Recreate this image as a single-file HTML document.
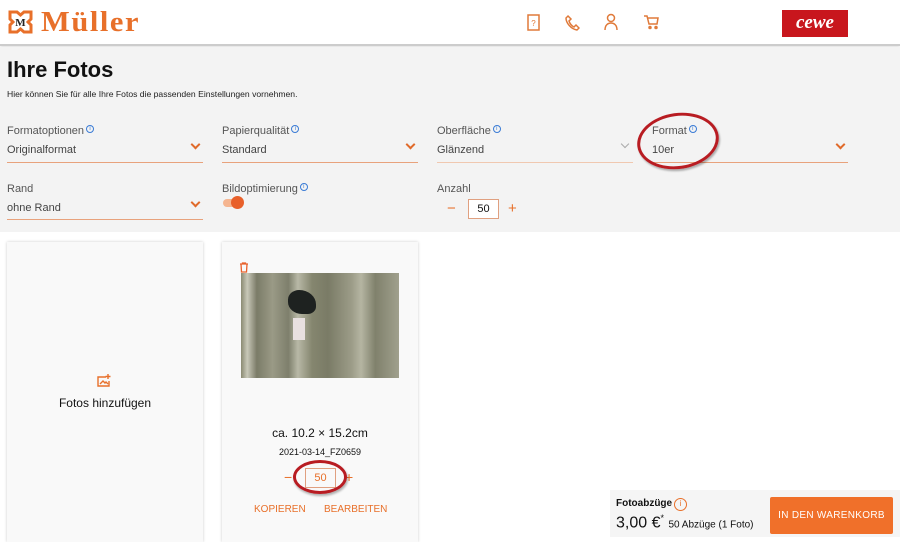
<!DOCTYPE html>
<html><head><meta charset="utf-8"><style>
*{box-sizing:border-box;margin:0;padding:0}
body{width:900px;height:537px;overflow:hidden;background:#fff;font-family:"Liberation Sans",sans-serif;color:#111;position:relative}
.hdr{position:absolute;left:0;top:0;width:900px;height:46px;background:#fff;border-bottom:2px solid #ccc;box-shadow:0 1px 3px rgba(0,0,0,.15)}
.gray{position:absolute;left:0;top:47px;width:900px;height:185px;background:#f3f3f3}
.abs{position:absolute}
.lbl{font-size:11px;color:#555}
.val{font-size:11px;color:#444}
.line{position:absolute;height:1px;background:#e8a27c}
.info{display:inline-block;width:8px;height:8px;border:1px solid #3a7bd5;border-radius:50%;font-size:6px;line-height:6px;text-align:center;color:#3a7bd5;vertical-align:4px;margin-left:2px}
.chev{position:absolute;width:7px;height:7px;border-right:2px solid #e06a2a;border-bottom:2px solid #e06a2a;transform:rotate(45deg)}
.card{position:absolute;background:#f9f9f9;box-shadow:0 0 3px rgba(0,0,0,.2)}
.or{color:#e8702a}
</style></head><body>
<div class="hdr"></div>
<svg class="abs" style="left:7px;top:9px" width="27" height="26" viewBox="0 0 27 26"><path d="M3 3h7l3.5 3 3.5-3h7v7l-3 3 3 3v7h-7l-3.5-3-3.5 3H3v-7l3-3-3-3z" fill="#fff" stroke="#e8702a" stroke-width="3"/><text x="13.5" y="17" font-family="Liberation Serif" font-weight="bold" font-size="11" text-anchor="middle" fill="#222">M</text></svg>
<div class="abs" style="left:41px;top:6px;font-family:'Liberation Serif',serif;font-weight:bold;font-size:29px;color:#e8702a;letter-spacing:1.5px;transform:scaleX(1.05);transform-origin:left">Müller</div>
<svg class="abs" style="left:526px;top:14px" width="16" height="18" viewBox="0 0 16 18" fill="none" stroke="#e07a3a" stroke-width="1.5"><rect x="2" y="1" width="11" height="15"/><text x="7.5" y="12" font-size="8" fill="#e07a3a" stroke="none" text-anchor="middle">?</text></svg>
<svg class="abs" style="left:564px;top:14px" width="16" height="18" viewBox="0 0 16 18" fill="none" stroke="#e07a3a" stroke-width="1.5"><path d="M4 2l3 3-2 2c1 3 3 5 5 6l2-2 3 3-2 2C7 15 2 9 2 4z"/></svg>
<svg class="abs" style="left:603px;top:13px" width="16" height="18" viewBox="0 0 16 18" fill="none" stroke="#e07a3a" stroke-width="1.5"><circle cx="8" cy="5" r="3.5"/><path d="M2 17c0-5 3-7 6-7s6 2 6 7"/></svg>
<svg class="abs" style="left:643px;top:14px" width="17" height="16" viewBox="0 0 17 16" fill="none" stroke="#e07a3a" stroke-width="1.5"><path d="M1 2h3l2 8h8l1-6H5"/><circle cx="7" cy="13.5" r="1" fill="#e07a3a"/><circle cx="13" cy="13.5" r="1" fill="#e07a3a"/></svg>
<div class="abs" style="left:782px;top:10px;width:66px;height:27px;background:#c8161d;color:#fff;font-family:'Liberation Serif',serif;font-style:italic;font-weight:bold;font-size:19px;text-align:center;line-height:25px">cewe</div>

<div class="gray"></div>
<div class="abs" style="left:7px;top:57px;font-size:22px;font-weight:bold;color:#111">Ihre Fotos</div>
<div class="abs" style="left:7px;top:89px;font-size:8.6px;color:#222">Hier können Sie für alle Ihre Fotos die passenden Einstellungen vornehmen.</div>

<div class="abs lbl" style="left:7px;top:125px">Formatoptionen<span class="info">i</span></div>
<div class="abs val" style="left:7px;top:144px">Originalformat</div>
<div class="chev" style="left:192px;top:141px"></div>
<div class="line" style="left:7px;top:162px;width:196px"></div>

<div class="abs lbl" style="left:222px;top:125px">Papierqualität<span class="info">i</span></div>
<div class="abs val" style="left:222px;top:144px">Standard</div>
<div class="chev" style="left:407px;top:141px"></div>
<div class="line" style="left:222px;top:162px;width:196px"></div>

<div class="abs lbl" style="left:437px;top:125px">Oberfläche<span class="info">i</span></div>
<div class="abs val" style="left:437px;top:144px">Glänzend</div>
<div class="chev" style="left:622px;top:141px;border-color:#aaa;width:6px;height:6px;border-width:1px"></div>
<div class="line" style="left:437px;top:162px;width:196px;background:#f0c8b0"></div>

<div class="abs lbl" style="left:652px;top:125px">Format<span class="info">i</span></div>
<div class="abs val" style="left:652px;top:144px">10er</div>
<div class="chev" style="left:837px;top:141px"></div>
<div class="line" style="left:652px;top:162px;width:196px"></div>
<div class="abs" style="left:637px;top:113px;width:82px;height:56px;border:3.5px solid #b81c22;border-radius:50%;transform:rotate(-8deg);box-shadow:1px 2px 2px rgba(0,0,0,.3)"></div>

<div class="abs lbl" style="left:7px;top:183px">Rand</div>
<div class="abs val" style="left:7px;top:202px">ohne Rand</div>
<div class="chev" style="left:192px;top:199px"></div>
<div class="line" style="left:7px;top:219px;width:196px"></div>

<div class="abs lbl" style="left:222px;top:183px">Bildoptimierung<span class="info">i</span></div>
<div class="abs" style="left:223px;top:199px;width:18px;height:8px;border-radius:4px;background:#f5b590"></div>
<div class="abs" style="left:231px;top:196px;width:13px;height:13px;border-radius:50%;background:#e8602a"></div>

<div class="abs lbl" style="left:437px;top:183px">Anzahl</div>
<div class="abs or" style="left:447px;top:200px;font-size:15px">−</div>
<div class="abs" style="left:468px;top:199px;width:31px;height:20px;border:1px solid #e0a080;background:#fff;font-size:11px;text-align:center;line-height:18px">50</div>
<div class="abs or" style="left:508px;top:200px;font-size:15px">+</div>

<div class="card" style="left:7px;top:242px;width:196px;height:300px"></div>
<svg class="abs" style="left:97px;top:374px" width="15" height="13" viewBox="0 0 15 13" fill="none" stroke="#e8702a" stroke-width="1.4"><path d="M9 3H1v9h11V7"/><path d="M3 10l3-3 2 2 1-1 2 2" /><path d="M11 0v5M8.5 2.5h5"/></svg>
<div class="abs" style="left:7px;top:396px;width:196px;text-align:center;font-size:12px;color:#111">Fotos hinzufügen</div>

<div class="card" style="left:222px;top:242px;width:196px;height:300px"></div>
<svg class="abs" style="left:239px;top:262px" width="10" height="11" viewBox="0 0 10 11" fill="none" stroke="#e8602a" stroke-width="1.3"><path d="M1 2h8M3.5 2V1h3v1M2 2l.5 8h5L8 2"/></svg>
<div class="abs" style="left:241px;top:273px;width:158px;height:105px;background:linear-gradient(90deg,#8a8a72 0%,#c8c8b8 4%,#7b7c68 10%,#9a9a86 20%,#7e7f6c 30%,#b8b8a6 36%,#85866f 45%,#7a7b66 55%,#9c9c88 70%,#b5b5a2 76%,#80816c 85%,#a0a08d 100%)"></div>
<div class="abs" style="left:288px;top:290px;width:28px;height:24px;background:#1e2220;border-radius:40% 60% 30% 50%"></div>
<div class="abs" style="left:293px;top:318px;width:12px;height:22px;background:#e8e0e0"></div>
<div class="abs" style="left:222px;top:426px;width:196px;text-align:center;font-size:12px;color:#111">ca. 10.2 × 15.2cm</div>
<div class="abs" style="left:222px;top:447px;width:196px;text-align:center;font-size:9px;color:#111">2021-03-14_FZ0659</div>
<div class="abs or" style="left:284px;top:469px;font-size:14px">−</div>
<div class="abs" style="left:305px;top:468px;width:31px;height:20px;border:1px solid #e0a080;font-size:11px;text-align:center;line-height:18px;color:#e8702a">50</div>
<div class="abs or" style="left:345px;top:469px;font-size:14px">+</div>
<div class="abs" style="left:293px;top:460px;width:54px;height:34px;border:3.5px solid #b81c22;border-radius:50%;box-shadow:1px 2px 2px rgba(0,0,0,.3)"></div>
<div class="abs or" style="left:254px;top:504px;font-size:10px">KOPIEREN</div>
<div class="abs or" style="left:324px;top:504px;font-size:10px">BEARBEITEN</div>

<div class="abs" style="left:610px;top:490px;width:290px;height:47px;background:#f5f5f5"></div>
<div class="abs" style="left:616px;top:498px;font-size:10px;font-weight:bold">Fotoabzüge</div>
<div class="abs" style="left:674px;top:498px;width:13px;height:13px;border:1.5px solid #e8702a;border-radius:50%;font-size:8px;line-height:10px;text-align:center;color:#e8702a">i</div>
<div class="abs" style="left:616px;top:513px;font-size:16px">3,00 €<sup style="font-size:9px">*</sup> <span style="font-size:10px">50 Abzüge (1 Foto)</span></div>
<div class="abs" style="left:770px;top:497px;width:123px;height:37px;background:#f0702a;border-radius:2px;color:#fff;font-size:10px;text-align:center;line-height:37px;letter-spacing:.3px">IN DEN WARENKORB</div>
</body></html>
